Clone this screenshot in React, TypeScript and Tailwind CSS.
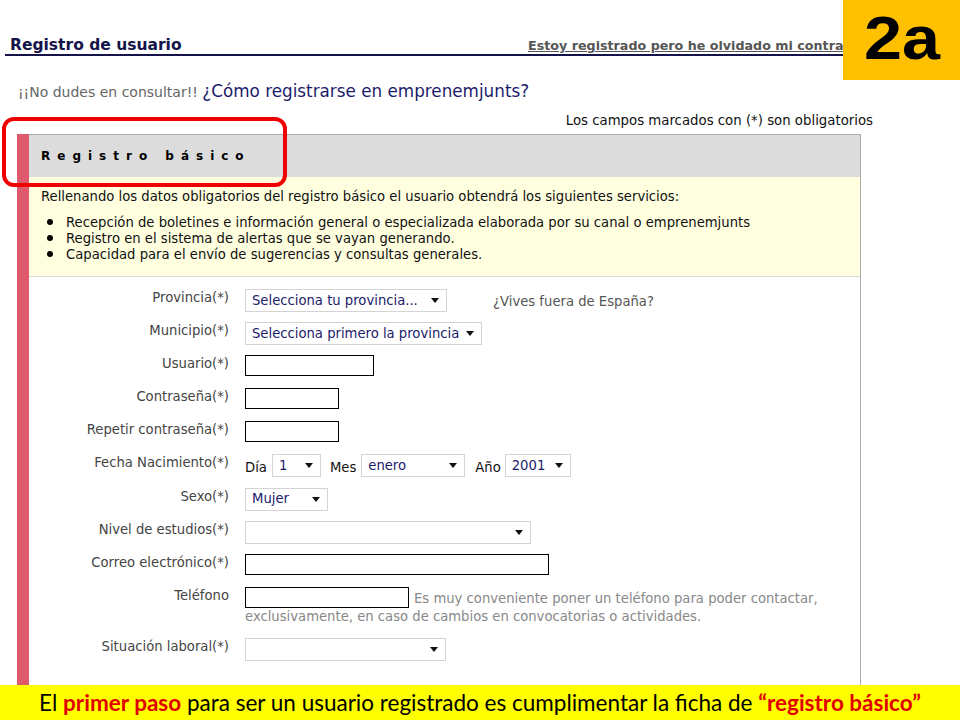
import React from 'react';

const verdana = { fontFamily: '"DejaVu Sans", Verdana, sans-serif' };

function Caret() {
  return (
    <svg width="8" height="5" viewBox="0 0 8 5" className="shrink-0">
      <path d="M0 0h8L4 5z" fill="#111" />
    </svg>
  );
}

function FakeSelect({ value = '', width }: { value?: string; width: string }) {
  return (
    <div
      className={`flex h-[23px] items-center justify-between border border-[#d4d4d4] bg-white pl-[6px] pr-[7px] text-[13.2px] text-[#1b1b6b] ${width}`}
    >
      <span className="whitespace-nowrap">{value}</span>
      <Caret />
    </div>
  );
}

function TextBox({ width }: { width: string }) {
  return <div className={`h-[21px] shrink-0 border border-black bg-white ${width}`} />;
}

function Row({ label, children }: { label: string; children: React.ReactNode }) {
  return (
    <div className="grid min-h-[23px] grid-cols-[199px_1fr] items-start gap-x-[16px]">
      <div className="text-right text-[13.2px] leading-[18px] text-[#444]">{label}</div>
      <div>{children}</div>
    </div>
  );
}

export default function App() {
  return (
    <div className="relative flex h-[720px] w-[960px] flex-col overflow-hidden bg-white" style={verdana}>
      {/* 2a badge */}
      <div className="absolute right-0 top-0 z-10 flex h-[80px] w-[117px] items-center justify-center bg-[#FFC000]">
        <span
          className="mt-[-3px] inline-block scale-x-[1.12] text-[61px] font-bold leading-none text-black"
          style={{ fontFamily: '"Liberation Sans", Arial, sans-serif' }}
        >
          2a
        </span>
      </div>

      {/* highlight */}
      <div className="absolute left-[2px] top-[117px] z-10 h-[70px] w-[285px] rounded-[12px] border-[4px] border-[#f00000]" />

      {/* header */}
      <div className="ml-[5px] mt-[36px] flex w-[840px] items-end border-b-2 border-[#14144a]">
        <span className="w-[523px] shrink-0 pl-[5px] text-[15.5px] font-bold leading-[18px] text-[#14144a]">
          Registro de usuario
        </span>
        <span className="whitespace-nowrap text-[12.7px] font-bold leading-[16px] text-[#555] underline">
          Estoy registrado pero he olvidado mi contra
        </span>
      </div>

      <div className="ml-[18px] mt-[25px] text-[14px] leading-[20px]">
        <span className="text-[#666]">¡¡No dudes en consultar!! </span>
        <span className="text-[16.8px] text-[#1b1b6b]">¿Cómo registrarse en emprenemjunts?</span>
      </div>

      <div className="mr-[87px] mt-[11px] text-right text-[13.3px] leading-[16px] text-[#111]">
        Los campos marcados con (*) son obligatorios
      </div>

      {/* form box */}
      <div className="ml-[17px] mt-[5px] flex min-h-0 w-[844px] flex-1 border-l-[12px] border-[#e05a6e]">
        <div className="flex flex-1 flex-col border-r border-t border-[#aaa]">
          <div className="flex h-[42px] items-center bg-[#dcdcdc] pl-[12px]">
            <span className="text-[12px] font-bold tracking-[7px] text-black">Registro básico</span>
          </div>
          <div className="border-b border-[#ddd] bg-[#ffffe0] pb-[13px] pl-[12px] pt-[12px] text-[13.2px] leading-[16px] text-[#111]">
            <p>Rellenando los datos obligatorios del registro básico el usuario obtendrá los siguientes servicios:</p>
            <ul className="mt-[10px]">
              {[
                'Recepción de boletines e información general o especializada elaborada por su canal o emprenemjunts',
                'Registro en el sistema de alertas que se vayan generando.',
                'Capacidad para el envío de sugerencias y consultas generales.',
              ].map((t) => (
                <li key={t} className="flex items-center">
                  <span className="ml-[6px] mr-[13px] mt-[-3px] h-[6px] w-[6px] shrink-0 rounded-full bg-black" />
                  <span>{t}</span>
                </li>
              ))}
            </ul>
          </div>

          <div className="flex flex-col gap-[10px] pl-[1px] pt-[12px]">
            <Row label="Provincia(*)">
              <div className="flex items-center">
                <FakeSelect value="Selecciona tu provincia..." width="w-[202px]" />
                <span className="ml-[46px] mt-[3px] text-[13.2px] text-[#555]">¿Vives fuera de España?</span>
              </div>
            </Row>
            <Row label="Municipio(*)">
              <FakeSelect value="Selecciona primero la provincia" width="w-[237px]" />
            </Row>
            <Row label="Usuario(*)">
              <TextBox width="w-[129px]" />
            </Row>
            <Row label="Contraseña(*)">
              <TextBox width="w-[94px]" />
            </Row>
            <Row label="Repetir contraseña(*)">
              <TextBox width="w-[94px]" />
            </Row>
            <Row label="Fecha Nacimiento(*)">
              <div className="flex items-center text-[13.2px] text-[#111]">
                <span className="mr-[5px] mt-[4px]">Día</span>
                <FakeSelect value="1" width="w-[49px]" />
                <span className="ml-[9px] mr-[5px] mt-[4px]">Mes</span>
                <FakeSelect value="enero" width="w-[104px]" />
                <span className="ml-[10px] mr-[4px] mt-[4px]">Año</span>
                <FakeSelect value="2001" width="w-[66px]" />
              </div>
            </Row>
            <Row label="Sexo(*)">
              <FakeSelect value="Mujer" width="w-[83px]" />
            </Row>
            <Row label="Nivel de estudios(*)">
              <FakeSelect width="w-[286px]" />
            </Row>
            <Row label="Correo electrónico(*)">
              <TextBox width="w-[304px]" />
            </Row>
            <Row label="Teléfono">
              <div className="pb-[3px] text-[13.2px] text-[#888]">
                <div className="flex items-center">
                  <TextBox width="w-[164px]" />
                  <span className="ml-[5px] mt-[2px] whitespace-nowrap">
                    Es muy conveniente poner un teléfono para poder contactar,
                  </span>
                </div>
                <div className="leading-[16px]">exclusivamente, en caso de cambios en convocatorias o actividades.</div>
              </div>
            </Row>
            <Row label="Situación laboral(*)">
              <FakeSelect width="w-[201px]" />
            </Row>
          </div>
        </div>
      </div>

      {/* bottom banner */}
      <div
        className="flex h-[35px] shrink-0 items-center justify-center bg-[#ffff00] text-[22.5px] text-black"
        style={{ fontFamily: 'Lato, "Open Sans", sans-serif' }}
      >
        <span>
          El <b className="text-[#e00000]">primer paso</b> para ser un usuario registrado es cumplimentar la ficha de{' '}
          <b className="text-[#e00000]">“registro básico”</b>
        </span>
      </div>
    </div>
  );
}
